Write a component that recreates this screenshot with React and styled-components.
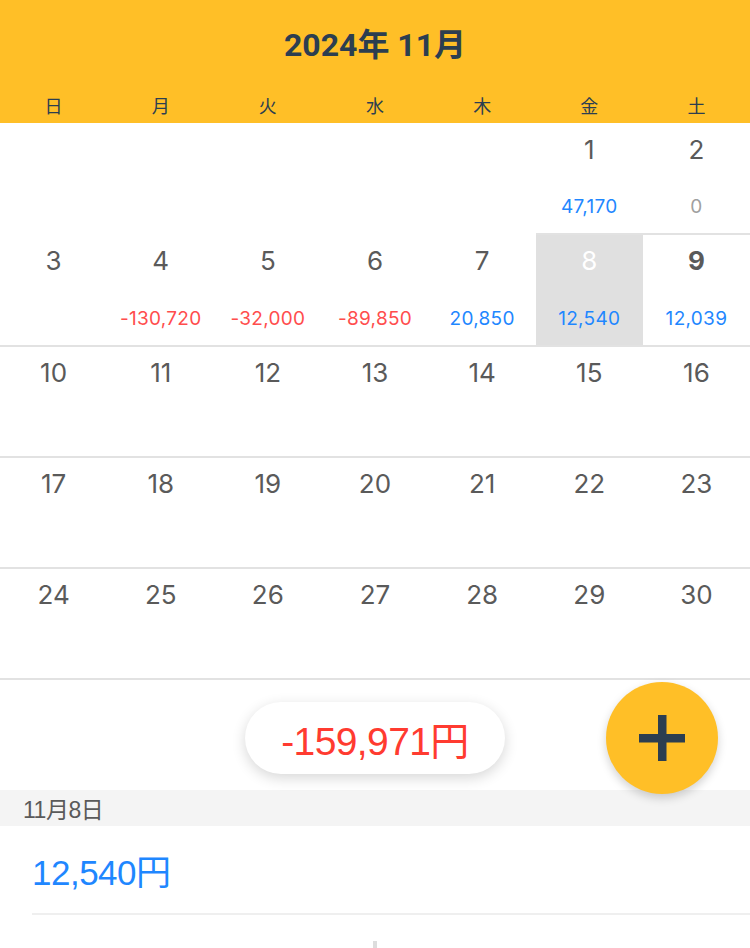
import React from "react";
import styled, { createGlobalStyle } from "styled-components";

const GlobalStyle = createGlobalStyle`
  body {
    margin: 0;
    background: #ffffff;
    font-family: "Liberation Sans", "Noto Sans CJK JP", sans-serif;
  }
`;

const YELLOW = "#ffbf27";
const NAVY = "#2c3e50";
const BLUE = "#1f87ff";
const RED = "#ff4d4d";

const Page = styled.div`
  width: 750px;
  overflow: hidden;
`;

const Header = styled.header`
  background: ${YELLOW};
  height: 123px;
  display: flex;
  flex-direction: column;
`;

const Title = styled.h1`
  margin: 0;
  height: 88px;
  padding-bottom: 4px;
  box-sizing: border-box;
  display: flex;
  align-items: center;
  justify-content: center;
  font-family: Roboto, "Noto Sans CJK JP", sans-serif;
  font-weight: 700;
  font-size: 32px;
  color: ${NAVY};
`;

const WeekRow = styled.div`
  display: grid;
  grid-template-columns: repeat(7, 1fr);
`;

const WeekDay = styled.div`
  text-align: center;
  font-family: "Noto Sans CJK JP", sans-serif;
  font-size: 18px;
  line-height: 36px;
  color: ${NAVY};
`;

const Grid = styled.div`
  display: grid;
  grid-template-columns: repeat(7, 1fr);
  padding-top: 1px;
`;

const Cell = styled.div`
  height: 111.25px;
  box-sizing: border-box;
  display: flex;
  flex-direction: column;
  align-items: center;
  padding-top: 9px;
  border-bottom: ${(p) => (p.$empty ? "2px solid transparent" : "2px solid #e2e2e2")};
  background: ${(p) => (p.$selected ? "#e0e0e0" : "transparent")};
`;

const DayNum = styled.div`
  font-family: Inter, "Liberation Sans", sans-serif;
  font-size: 26px;
  line-height: 34px;
  font-weight: ${(p) => (p.$today ? 700 : 400)};
  color: ${(p) => (p.$selected ? "#ffffff" : "#5a5a5a")};
`;

const Amount = styled.div`
  margin-top: auto;
  margin-bottom: 15px;
  font-family: Inter, "Liberation Sans", sans-serif;
  font-size: 19px;
  line-height: 22px;
  letter-spacing: 0.3px;
  color: ${(p) => (p.$tone === "minus" ? RED : p.$tone === "zero" ? "#a0a0a0" : BLUE)};
`;

const SummaryBar = styled.div`
  position: relative;
  height: 110px;
  display: flex;
  justify-content: center;
  padding-top: 22px;
  box-sizing: border-box;
`;

const TotalPill = styled.div`
  width: 260px;
  height: 72px;
  border-radius: 36px;
  background: #ffffff;
  box-shadow: 0 4px 14px rgba(0, 0, 0, 0.16);
  display: flex;
  align-items: center;
  justify-content: center;
  font-size: 39px;
  color: #ff3b30;
  letter-spacing: -0.6px;
`;

const Fab = styled.button`
  position: absolute;
  right: 32px;
  top: 2px;
  width: 112px;
  height: 112px;
  border-radius: 50%;
  border: none;
  background: ${YELLOW};
  box-shadow: 0 4px 10px rgba(0, 0, 0, 0.18);
  display: flex;
  align-items: center;
  justify-content: center;
  z-index: 2;
  padding: 0;
`;

const SectionHeader = styled.div`
  background: #f4f4f4;
  height: 36px;
  display: flex;
  align-items: center;
  padding-left: 23px;
  font-size: 23px;
  color: #5a5a5a;
  letter-spacing: -0.5px;
`;

const EntryRow = styled.div`
  margin-left: 32px;
  height: 87px;
  display: flex;
  align-items: center;
  border-bottom: 2px solid #efefef;
  font-size: 35px;
  color: ${BLUE};
  letter-spacing: -0.5px;
`;

const Handle = styled.div`
  width: 4px;
  height: 10px;
  margin: 26px auto 0;
  background: #dddddd;
`;

const weekDays = ["日", "月", "火", "水", "木", "金", "土"];

const amounts = {
  1: 47170,
  2: 0,
  4: -130720,
  5: -32000,
  6: -89850,
  7: 20850,
  8: 12540,
  9: 12039,
};

const fmt = (n) => n.toLocaleString("en-US");

export default function App() {
  const cells = [];
  for (let i = 0; i < 5; i++) cells.push(null);
  for (let d = 1; d <= 30; d++) cells.push(d);

  return (
    <Page>
      <GlobalStyle />
      <Header>
        <Title>2024年 11月</Title>
        <WeekRow>
          {weekDays.map((w) => (
            <WeekDay key={w}>{w}</WeekDay>
          ))}
        </WeekRow>
      </Header>
      <Grid>
        {cells.map((d, i) => {
          if (d === null) return <Cell key={"e" + i} $empty />;
          const a = amounts[d];
          const tone = a === undefined ? null : a < 0 ? "minus" : a === 0 ? "zero" : "plus";
          return (
            <Cell key={d} $selected={d === 8}>
              <DayNum $selected={d === 8} $today={d === 9}>
                {d}
              </DayNum>
              {a !== undefined && <Amount $tone={tone}>{fmt(a)}</Amount>}
            </Cell>
          );
        })}
      </Grid>
      <SummaryBar>
        <TotalPill>-159,971円</TotalPill>
        <Fab aria-label="追加">
          <svg width="46" height="46" viewBox="0 0 46 46">
            <rect x="0" y="19" width="46" height="8.5" fill={NAVY} />
            <rect x="19" y="0" width="8.5" height="46" fill={NAVY} />
          </svg>
        </Fab>
      </SummaryBar>
      <SectionHeader>11月8日</SectionHeader>
      <EntryRow>12,540円</EntryRow>
      <Handle />
    </Page>
  );
}
